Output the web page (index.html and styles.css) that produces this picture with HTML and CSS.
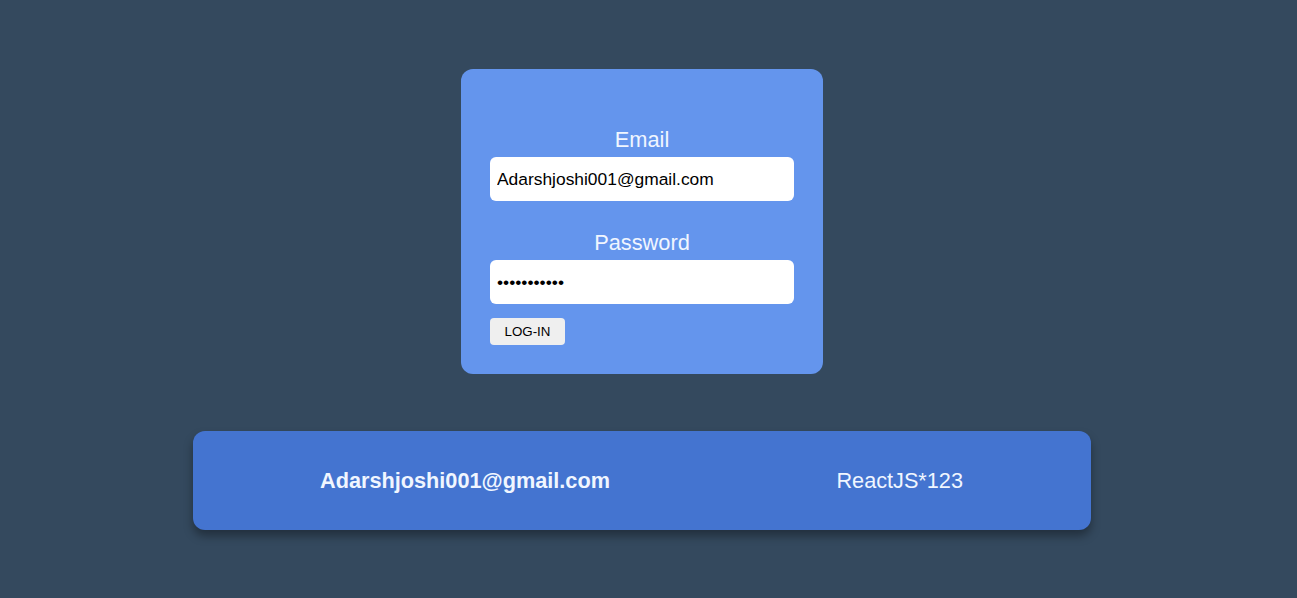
FILE: index.html
```html
<!DOCTYPE html>
<html>
<head>
<meta charset="utf-8">
<link rel="stylesheet" href="styles.css">
</head>
<body>
<div class="page">
  <form class="card">
    <label class="label" for="email">Email</label>
    <input class="field" id="email" type="text" value="Adarshjoshi001@gmail.com">
    <label class="label label-pw" for="pw">Password</label>
    <input class="field" id="pw" type="password" value="ReactJS*123">
    <div class="actions"><button type="button" class="btn">LOG-IN</button></div>
  </form>
  <div class="result">
    <span class="res-email">Adarshjoshi001@gmail.com</span>
    <span class="res-pw">ReactJS*123</span>
  </div>
</div>
</body>
</html>
```
FILE: styles.css
```css
html, body {
  margin: 0;
  padding: 0;
  height: 100%;
  background: #34495e;
  font-family: "Liberation Sans", Arial, sans-serif;
}
.page {
  display: flex;
  flex-direction: column;
  align-items: center;
  padding-top: 69px;
  padding-right: 13px;
}
.card {
  width: 362px;
  box-sizing: border-box;
  background: #6495ed;
  border-radius: 12px;
  padding: 58px 29px 29px;
  display: flex;
  flex-direction: column;
}
.label {
  color: #f0f6ff;
  font-size: 21.8px;
  line-height: 25px;
  text-align: center;
  margin-bottom: 5px;
}
.label-pw {
  margin-top: 29px;
}
.field {
  height: 44px;
  box-sizing: border-box;
  border: none;
  border-radius: 6px;
  background: #fff;
  padding: 0 7px;
  font-family: "Liberation Sans", Arial, sans-serif;
  font-size: 17.4px;
  color: #000;
  outline: none;
}
.actions {
  margin-top: 14px;
  display: flex;
}
.btn {
  width: 75px;
  height: 27px;
  border: none;
  border-radius: 4px;
  background: #efefef;
  font-family: "Liberation Sans", Arial, sans-serif;
  font-size: 13.33px;
  color: #000;
  padding: 0;
}
.result {
  margin-top: 57px;
  width: 898px;
  height: 99px;
  box-sizing: border-box;
  background: #4474d0;
  border-radius: 12px;
  box-shadow: 0 6px 10px rgba(0, 0, 0, 0.35);
  display: flex;
  align-items: center;
  padding: 0 128px 0 127px;
  justify-content: space-between;
  color: #f0f6ff;
  font-size: 21.7px;
}
.res-email {
  font-weight: bold;
}
```
